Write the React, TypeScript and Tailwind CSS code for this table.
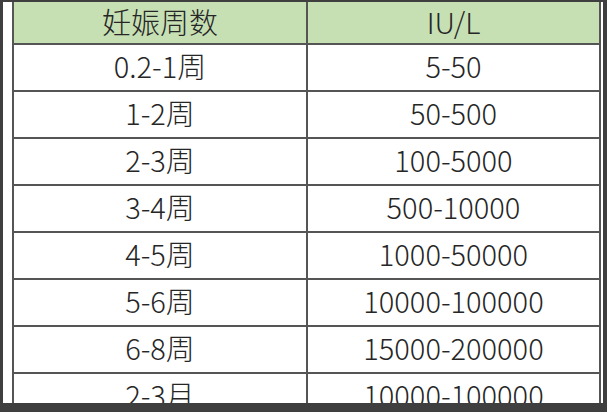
import React from "react";

const rows = [
  ["0.2-1周", "5-50"],
  ["1-2周", "50-500"],
  ["2-3周", "100-5000"],
  ["3-4周", "500-10000"],
  ["4-5周", "1000-50000"],
  ["5-6周", "10000-100000"],
  ["6-8周", "15000-200000"],
  ["2-3月", "10000-100000"],
];

const font = { fontFamily: '"Noto Sans CJK SC", "Noto Sans", sans-serif' };

const App: React.FC = () => {
  return (
    <div className="w-[607px] h-[412px] bg-[#3f3f3f] pt-[2px] pl-[3px] pr-[4px] pb-[9px]">
      <div className="h-full bg-white pl-[9px] pr-[2px] overflow-hidden">
        <div
          className="border-x-2 border-[#555] text-[#262626] text-[29px] font-light leading-none"
          style={font}
        >
          {/* Header */}
          <div className="grid grid-cols-[294px_1fr] h-[43px] bg-[#c6e0b4] border-b-2 border-[#555]">
            <div className="flex items-center justify-center border-r-2 border-[#555] pb-[2px]">
              妊娠周数
            </div>
            <div className="flex items-center justify-center pb-[2px]">IU/L</div>
          </div>

          {/* Rows */}
          {rows.map(([week, value]) => (
            <div
              key={week}
              className="grid grid-cols-[294px_1fr] h-[47px] border-b-2 border-[#555]"
            >
              <div className="flex items-center justify-center border-r-2 border-[#555] pb-[4px]">
                {week}
              </div>
              <div className="flex items-center justify-center pb-[4px]">{value}</div>
            </div>
          ))}
        </div>
      </div>
    </div>
  );
};

export default App;
